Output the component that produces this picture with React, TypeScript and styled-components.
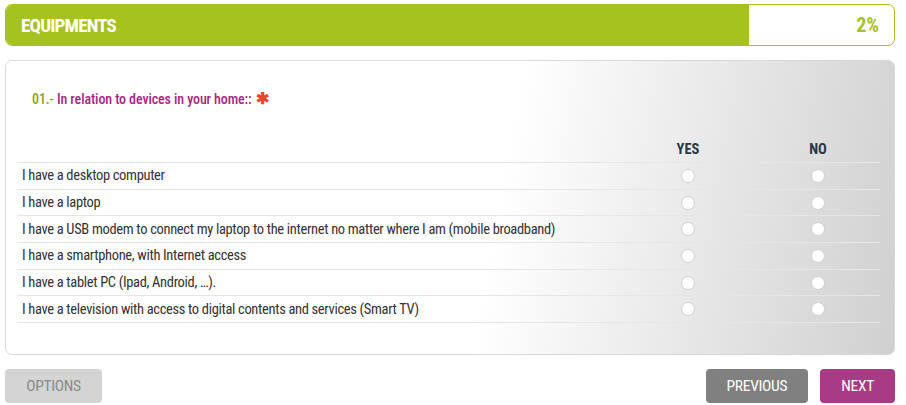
import React from "react";
import styled, { createGlobalStyle } from "styled-components";

const Global = createGlobalStyle`
  html, body { margin: 0; padding: 0; background: #fff; }
  body { font-family: Roboto, "Liberation Sans", sans-serif; font-stretch: condensed; }
  * { box-sizing: border-box; }
`;

const Page = styled.div`
  width: 906px;
  padding: 4px 11px 0 5px;
  display: flex;
  flex-direction: column;
`;

const Progress = styled.div`
  height: 42px;
  display: flex;
  border: 1px solid #a6c21e;
  border-radius: 7px;
  overflow: hidden;
  background: #fff;
`;

const ProgressFill = styled.div`
  width: 743px;
  background: #a6c21e;
  display: flex;
  align-items: center;
  padding-left: 15px;
  color: #fff;
  font-size: 19px;
  font-weight: 700;
  letter-spacing: -0.8px;
`;

const ProgressValue = styled.div`
  flex: 1;
  display: flex;
  align-items: center;
  justify-content: flex-end;
  padding-right: 15px;
  color: #a6c21e;
  font-size: 20px;
  font-weight: 700;
`;

const Card = styled.div`
  margin-top: 14px;
  height: 295px;
  border: 1px solid #d9d9d9;
  border-radius: 7px;
  background: linear-gradient(100deg, #ffffff 55%, #d0d0d0 100%);
  padding: 28px 14px 0 11px;
`;

const Question = styled.div`
  padding-left: 15px;
  font-size: 14px;
  font-weight: 500;
  color: #a8267f;
  letter-spacing: -0.1px;
  height: 40px;
`;

const Num = styled.span`
  color: #8aa313;
`;

const Star = styled.span`
  color: #e8452c;
  font-size: 16px;
  font-weight: 700;
  margin-left: 4px;
`;

const Table = styled.div`
  margin-top: 6px;
  display: flex;
  flex-direction: column;
`;

const Row = styled.div<{ $head?: boolean }>`
  display: grid;
  grid-template-columns: 1fr 136px 124px;
  height: ${(p) => (p.$head ? "28px" : "26.7px")};
  align-items: center;
  border-bottom: 1px solid #e6e6e6;
  font-size: 14.5px;
  color: #333;
  letter-spacing: -0.33px;
`;

const Label = styled.div`
  padding-left: 5px;
`;

const Head = styled.div`
  text-align: center;
  font-weight: 700;
  color: #2c3645;
  font-size: 14.5px;
  letter-spacing: 0;
  padding-top: 2px;
`;

const Cell = styled.div`
  display: flex;
  justify-content: center;
`;

const Radio = styled.span`
  width: 14px;
  height: 14px;
  border-radius: 50%;
  background: #fff;
  border: 1px solid #d0d0d0;
`;

const Footer = styled.div`
  margin-top: 14px;
  display: flex;
  align-items: center;
`;

const Btn = styled.button<{ $bg: string; $fg: string }>`
  height: 34px;
  border: none;
  border-radius: 4px;
  padding: 0 21px;
  background: ${(p) => p.$bg};
  color: ${(p) => p.$fg};
  font-family: Roboto, "Liberation Sans", sans-serif;
  font-stretch: condensed;
  font-size: 15.5px;
  letter-spacing: -0.3px;
`;

const Spacer = styled.div`
  flex: 1;
`;

const items = [
  "I have a desktop computer",
  "I have a laptop",
  "I have a USB modem to connect my laptop to the internet no matter where I am (mobile broadband)",
  "I have a smartphone, with Internet access",
  "I have a tablet PC (Ipad, Android, …).",
  "I have a television with access to digital contents and services (Smart TV)",
];

export default function App() {
  return (
    <>
      <Global />
      <Page>
        <Progress>
          <ProgressFill>EQUIPMENTS</ProgressFill>
          <ProgressValue>2%</ProgressValue>
        </Progress>
        <Card>
          <Question>
            <Num>01.- </Num>In relation to devices in your home::<Star>✱</Star>
          </Question>
          <Table>
            <Row $head>
              <Label />
              <Head>YES</Head>
              <Head>NO</Head>
            </Row>
            {items.map((t) => (
              <Row key={t}>
                <Label>{t}</Label>
                <Cell><Radio /></Cell>
                <Cell><Radio /></Cell>
              </Row>
            ))}
          </Table>
        </Card>
        <Footer>
          <Btn $bg="#d4d4d4" $fg="#8a8a8a" style={{ width: 97 }}>OPTIONS</Btn>
          <Spacer />
          <Btn $bg="#808080" $fg="#fff">PREVIOUS</Btn>
          <Btn $bg="#a93a85" $fg="#fff" style={{ marginLeft: 12 }}>NEXT</Btn>
        </Footer>
      </Page>
    </>
  );
}
